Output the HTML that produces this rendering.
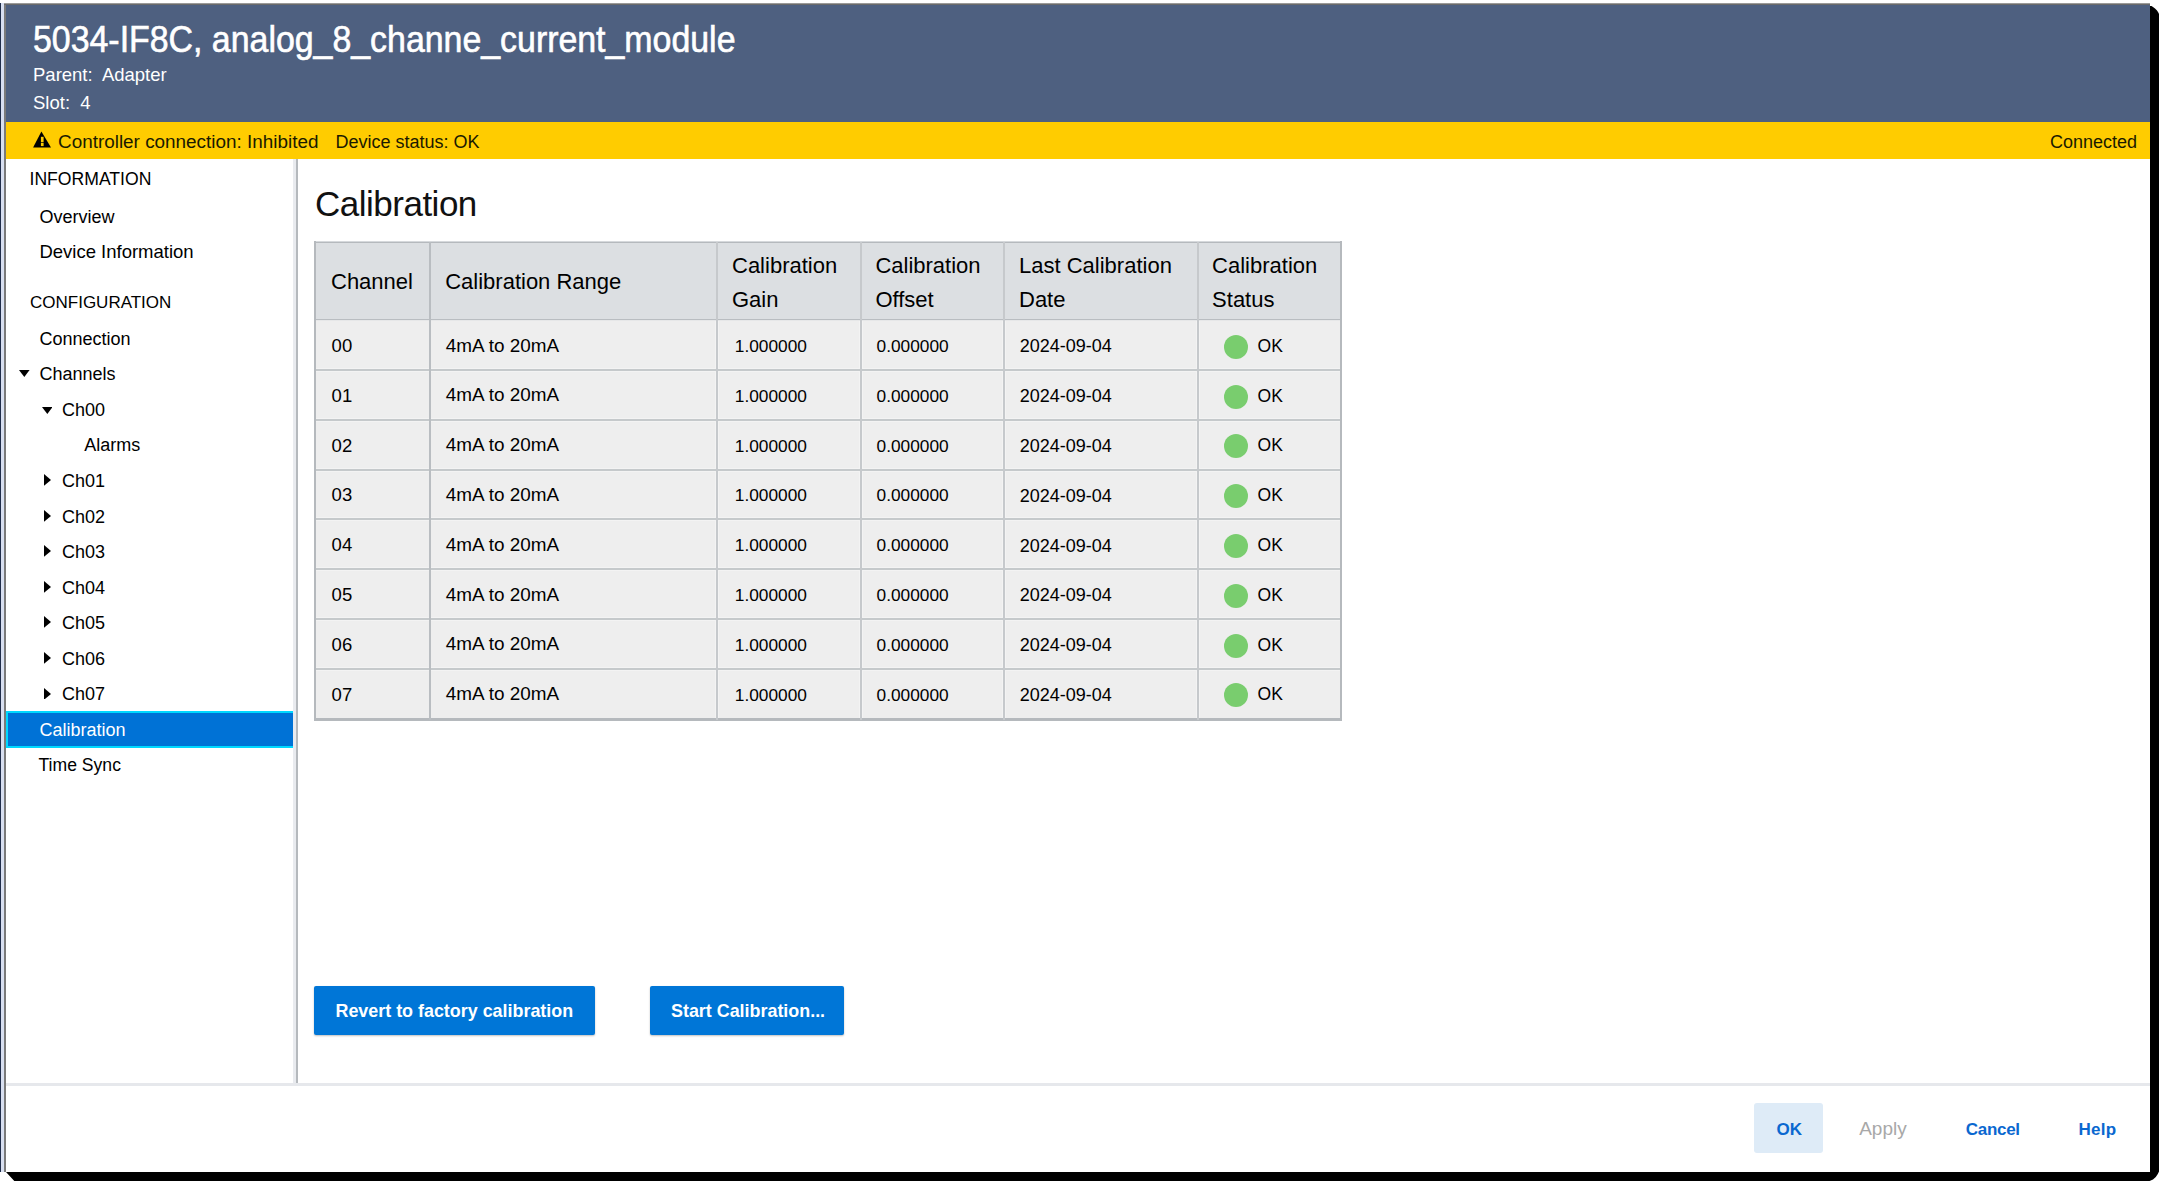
<!DOCTYPE html>
<html><head><meta charset="utf-8"><style>
html,body{margin:0;padding:0;width:2165px;height:1187px;overflow:hidden;background:#fff;}
body{position:relative;font-family:"Liberation Sans",sans-serif;}
.t{position:absolute;white-space:nowrap;line-height:1;}
.r{position:absolute;display:block;}
</style></head><body>
<div class="r" style="left:0px;top:3px;width:1px;height:1169px;background:#1f2d4a;"></div>
<div class="r" style="left:1px;top:3px;width:3px;height:1169px;background:#d8dff0;"></div>
<div class="r" style="left:4px;top:3px;width:2px;height:1169px;background:#7a7a7a;"></div>
<div class="r" style="left:4px;top:3px;width:2146px;height:1px;background:#9a9a9a;"></div>
<div class="r" style="left:4px;top:4px;width:2146px;height:1px;background:#6a6a6a;"></div>
<div class="r" style="left:6px;top:5px;width:2144px;height:117px;background:#4e6080;"></div>
<div class="r" style="left:6px;top:122px;width:2144px;height:37px;background:#ffcc00;"></div>
<svg class="r" style="left:0;top:0" width="2165" height="1187"><polygon points="6,1172 2150,1172 2150,6 2151.5,6 2153,7 2155,8.5 2157,10.5 2158.3,12.5 2159,14 2159,1171.5 2157.8,1174 2155.8,1177 2153,1179.6 2149.6,1181 14.3,1181" fill="#000"/></svg>
<div class="t" style="left:32.5px;top:21.92px;font-size:36px;color:#fff;transform:scaleX(0.941);transform-origin:0 0;-webkit-text-stroke:0.6px #fff;">5034-IF8C, analog_8_channe_current_module</div>
<div class="t" style="left:33px;top:65.64px;font-size:18.5px;color:#fff;">Parent:&nbsp; Adapter</div>
<div class="t" style="left:33px;top:94.34px;font-size:18.5px;color:#fff;">Slot:&nbsp; 4</div>
<svg class="r" style="left:32px;top:130px" width="21" height="19" viewBox="0 0 21 19"><polygon points="9.4,1.4 19,17.5 1.1,17.5" fill="#000"/><rect x="8.9" y="6.8" width="2.7" height="5.2" fill="#ffcc00"/><rect x="8.9" y="12.7" width="2.7" height="3.4" fill="#ffcc00"/></svg>
<div class="t" style="left:58px;top:132.50px;font-size:18.9px;color:#1a1a00;">Controller connection: Inhibited</div>
<div class="t" style="left:335.5px;top:132.56px;font-size:18px;color:#1a1a00;">Device status: OK</div>
<div class="t" style="left:2050px;top:133.46px;font-size:18px;color:#1a1a00;">Connected</div>
<div class="r" style="left:293px;top:159px;width:3px;height:924px;background:#e9ebef;"></div>
<div class="r" style="left:296px;top:159px;width:2px;height:924px;background:#b5b9bd;"></div>
<div class="r" style="left:6px;top:1083px;width:2144px;height:3px;background:#e6e8ec;"></div>
<div class="t" style="left:29.5px;top:170.90px;font-size:17.6px;color:#000;">INFORMATION</div>
<div class="t" style="left:39.4px;top:208.06px;font-size:18px;color:#000;">Overview</div>
<div class="t" style="left:39.4px;top:243.34px;font-size:18.5px;color:#000;">Device Information</div>
<div class="t" style="left:30px;top:293.81px;font-size:17px;color:#000;">CONFIGURATION</div>
<div class="t" style="left:39.4px;top:329.76px;font-size:18px;color:#000;">Connection</div>
<div class="t" style="left:39.5px;top:365.36px;font-size:18px;color:#000;">Channels</div>
<div class="t" style="left:62px;top:400.91px;font-size:18px;color:#000;">Ch00</div>
<div class="t" style="left:84.3px;top:436.46px;font-size:18px;color:#000;">Alarms</div>
<div class="t" style="left:62px;top:472.01px;font-size:18px;color:#000;">Ch01</div>
<div class="t" style="left:62px;top:507.56px;font-size:18px;color:#000;">Ch02</div>
<div class="t" style="left:62px;top:543.11px;font-size:18px;color:#000;">Ch03</div>
<div class="t" style="left:62px;top:578.66px;font-size:18px;color:#000;">Ch04</div>
<div class="t" style="left:62px;top:614.21px;font-size:18px;color:#000;">Ch05</div>
<div class="t" style="left:62px;top:649.76px;font-size:18px;color:#000;">Ch06</div>
<div class="t" style="left:62px;top:685.31px;font-size:18px;color:#000;">Ch07</div>
<svg class="r" style="left:19.4px;top:369.8px" width="10.6" height="7"><polygon points="0,0 10.6,0 5.3,7" fill="#000"/></svg>
<svg class="r" style="left:41.8px;top:407.2px" width="10.6" height="7"><polygon points="0,0 10.6,0 5.3,7" fill="#000"/></svg>
<svg class="r" style="left:44.2px;top:474.25px" width="7" height="11.8"><polygon points="0,0 7,5.9 0,11.8" fill="#000"/></svg>
<svg class="r" style="left:44.2px;top:509.79999999999995px" width="7" height="11.8"><polygon points="0,0 7,5.9 0,11.8" fill="#000"/></svg>
<svg class="r" style="left:44.2px;top:545.35px" width="7" height="11.8"><polygon points="0,0 7,5.9 0,11.8" fill="#000"/></svg>
<svg class="r" style="left:44.2px;top:580.9px" width="7" height="11.8"><polygon points="0,0 7,5.9 0,11.8" fill="#000"/></svg>
<svg class="r" style="left:44.2px;top:616.45px" width="7" height="11.8"><polygon points="0,0 7,5.9 0,11.8" fill="#000"/></svg>
<svg class="r" style="left:44.2px;top:652.0px" width="7" height="11.8"><polygon points="0,0 7,5.9 0,11.8" fill="#000"/></svg>
<svg class="r" style="left:44.2px;top:687.55px" width="7" height="11.8"><polygon points="0,0 7,5.9 0,11.8" fill="#000"/></svg>
<div class="r" style="left:6px;top:711px;width:287px;height:37px;background:#00d8ff;"></div>
<div class="r" style="left:8px;top:713px;width:285px;height:33px;background:#0072d6;"></div>
<div class="t" style="left:39.5px;top:721.46px;font-size:18px;color:#fff;">Calibration</div>
<div class="t" style="left:38.5px;top:756.80px;font-size:17.6px;color:#000;">Time Sync</div>
<div class="t" style="left:315px;top:185.67px;font-size:35px;color:#111;letter-spacing:-0.5px;">Calibration</div>
<div class="r" style="left:315px;top:242px;width:1026.5px;height:77.5px;background:#dcdfe2;"></div>
<div class="r" style="left:315px;top:319.5px;width:1026.5px;height:398.4px;background:#eeeeee;"></div>
<div class="r" style="left:715px;top:321px;width:1px;height:397px;background:#f3f3f3;"></div>
<div class="r" style="left:718px;top:321px;width:1px;height:397px;background:#f3f3f3;"></div>
<div class="r" style="left:859px;top:321px;width:1px;height:397px;background:#f3f3f3;"></div>
<div class="r" style="left:862px;top:321px;width:1px;height:397px;background:#f3f3f3;"></div>
<div class="r" style="left:1002px;top:321px;width:1px;height:397px;background:#f3f3f3;"></div>
<div class="r" style="left:1005px;top:321px;width:1px;height:397px;background:#f3f3f3;"></div>
<div class="r" style="left:1196px;top:321px;width:1px;height:397px;background:#f3f3f3;"></div>
<div class="r" style="left:1199px;top:321px;width:1px;height:397px;background:#f3f3f3;"></div>
<div class="r" style="left:314px;top:241px;width:1028px;height:1px;background:#d6d9dc;"></div>
<div class="r" style="left:314px;top:242px;width:1028px;height:1px;background:#b5b9bd;"></div>
<div class="r" style="left:314px;top:319px;width:1028px;height:1px;background:#b9bdc1;"></div>
<div class="r" style="left:314px;top:320px;width:1028px;height:1px;background:#e6e7e8;"></div>
<div class="r" style="left:314px;top:368px;width:1028px;height:1px;background:#f3f3f3;"></div>
<div class="r" style="left:314px;top:369px;width:1028px;height:2px;background:#c5c9cb;"></div>
<div class="r" style="left:314px;top:371px;width:1028px;height:1px;background:#f3f3f3;"></div>
<div class="r" style="left:314px;top:418px;width:1028px;height:1px;background:#f3f3f3;"></div>
<div class="r" style="left:314px;top:419px;width:1028px;height:2px;background:#c5c9cb;"></div>
<div class="r" style="left:314px;top:421px;width:1028px;height:1px;background:#f3f3f3;"></div>
<div class="r" style="left:314px;top:468px;width:1028px;height:1px;background:#f3f3f3;"></div>
<div class="r" style="left:314px;top:469px;width:1028px;height:2px;background:#c5c9cb;"></div>
<div class="r" style="left:314px;top:471px;width:1028px;height:1px;background:#f3f3f3;"></div>
<div class="r" style="left:314px;top:517px;width:1028px;height:1px;background:#f3f3f3;"></div>
<div class="r" style="left:314px;top:518px;width:1028px;height:2px;background:#c5c9cb;"></div>
<div class="r" style="left:314px;top:520px;width:1028px;height:1px;background:#f3f3f3;"></div>
<div class="r" style="left:314px;top:567px;width:1028px;height:1px;background:#f3f3f3;"></div>
<div class="r" style="left:314px;top:568px;width:1028px;height:2px;background:#c5c9cb;"></div>
<div class="r" style="left:314px;top:570px;width:1028px;height:1px;background:#f3f3f3;"></div>
<div class="r" style="left:314px;top:617px;width:1028px;height:1px;background:#f3f3f3;"></div>
<div class="r" style="left:314px;top:618px;width:1028px;height:2px;background:#c5c9cb;"></div>
<div class="r" style="left:314px;top:620px;width:1028px;height:1px;background:#f3f3f3;"></div>
<div class="r" style="left:314px;top:667px;width:1028px;height:1px;background:#f3f3f3;"></div>
<div class="r" style="left:314px;top:668px;width:1028px;height:2px;background:#c5c9cb;"></div>
<div class="r" style="left:314px;top:670px;width:1028px;height:1px;background:#f3f3f3;"></div>
<div class="r" style="left:314px;top:718px;width:1028px;height:3px;background:#b5b9bd;"></div>
<div class="r" style="left:314px;top:241px;width:2px;height:480px;background:#b5b9bd;"></div>
<div class="r" style="left:1340px;top:241px;width:2px;height:480px;background:#b5b9bd;"></div>
<div class="r" style="left:429px;top:242px;width:2px;height:478px;background:#b9bdc1;"></div>
<div class="r" style="left:716px;top:242px;width:2px;height:478px;background:#c6c9cc;"></div>
<div class="r" style="left:860px;top:242px;width:2px;height:478px;background:#c6c9cc;"></div>
<div class="r" style="left:1003px;top:242px;width:2px;height:478px;background:#c6c9cc;"></div>
<div class="r" style="left:1197px;top:242px;width:2px;height:478px;background:#c6c9cc;"></div>
<div class="t" style="left:331px;top:271.07px;font-size:22px;color:#000;">Channel</div>
<div class="t" style="left:445.2px;top:271.07px;font-size:22px;color:#000;">Calibration Range</div>
<div class="t" style="left:732px;top:255.27px;font-size:22px;color:#000;">Calibration</div>
<div class="t" style="left:732px;top:288.77px;font-size:22px;color:#000;">Gain</div>
<div class="t" style="left:875.4px;top:255.27px;font-size:22px;color:#000;">Calibration</div>
<div class="t" style="left:875.4px;top:288.77px;font-size:22px;color:#000;">Offset</div>
<div class="t" style="left:1019px;top:255.27px;font-size:22px;color:#000;">Last Calibration</div>
<div class="t" style="left:1019px;top:288.77px;font-size:22px;color:#000;">Date</div>
<div class="t" style="left:1212.1px;top:255.27px;font-size:22px;color:#000;">Calibration</div>
<div class="t" style="left:1212.1px;top:288.77px;font-size:22px;color:#000;">Status</div>
<div class="t" style="left:331.6px;top:336.94px;font-size:18.5px;color:#000;">00</div>
<div class="t" style="left:445.8px;top:336.60px;font-size:18.9px;color:#000;">4mA to 20mA</div>
<div class="t" style="left:734.8px;top:337.95px;font-size:17.3px;color:#000;">1.000000</div>
<div class="t" style="left:876.6px;top:337.95px;font-size:17.3px;color:#000;">0.000000</div>
<div class="t" style="left:1019.8px;top:337.36px;font-size:18px;color:#000;">2024-09-04</div>
<div class="r" style="left:1223.5px;top:334.8px;width:24px;height:24px;background:#79cd6e;border-radius:50%;"></div>
<div class="t" style="left:1257.6px;top:337.78px;font-size:17.5px;color:#000;">OK</div>
<div class="t" style="left:331.6px;top:386.74px;font-size:18.5px;color:#000;">01</div>
<div class="t" style="left:445.8px;top:386.40px;font-size:18.9px;color:#000;">4mA to 20mA</div>
<div class="t" style="left:734.8px;top:387.75px;font-size:17.3px;color:#000;">1.000000</div>
<div class="t" style="left:876.6px;top:387.75px;font-size:17.3px;color:#000;">0.000000</div>
<div class="t" style="left:1019.8px;top:387.16px;font-size:18px;color:#000;">2024-09-04</div>
<div class="r" style="left:1223.5px;top:384.6px;width:24px;height:24px;background:#79cd6e;border-radius:50%;"></div>
<div class="t" style="left:1257.6px;top:387.58px;font-size:17.5px;color:#000;">OK</div>
<div class="t" style="left:331.6px;top:436.54px;font-size:18.5px;color:#000;">02</div>
<div class="t" style="left:445.8px;top:436.20px;font-size:18.9px;color:#000;">4mA to 20mA</div>
<div class="t" style="left:734.8px;top:437.55px;font-size:17.3px;color:#000;">1.000000</div>
<div class="t" style="left:876.6px;top:437.55px;font-size:17.3px;color:#000;">0.000000</div>
<div class="t" style="left:1019.8px;top:436.96px;font-size:18px;color:#000;">2024-09-04</div>
<div class="r" style="left:1223.5px;top:434.4px;width:24px;height:24px;background:#79cd6e;border-radius:50%;"></div>
<div class="t" style="left:1257.6px;top:437.38px;font-size:17.5px;color:#000;">OK</div>
<div class="t" style="left:331.6px;top:486.34px;font-size:18.5px;color:#000;">03</div>
<div class="t" style="left:445.8px;top:486.00px;font-size:18.9px;color:#000;">4mA to 20mA</div>
<div class="t" style="left:734.8px;top:487.35px;font-size:17.3px;color:#000;">1.000000</div>
<div class="t" style="left:876.6px;top:487.35px;font-size:17.3px;color:#000;">0.000000</div>
<div class="t" style="left:1019.8px;top:486.76px;font-size:18px;color:#000;">2024-09-04</div>
<div class="r" style="left:1223.5px;top:484.2px;width:24px;height:24px;background:#79cd6e;border-radius:50%;"></div>
<div class="t" style="left:1257.6px;top:487.18px;font-size:17.5px;color:#000;">OK</div>
<div class="t" style="left:331.6px;top:536.14px;font-size:18.5px;color:#000;">04</div>
<div class="t" style="left:445.8px;top:535.80px;font-size:18.9px;color:#000;">4mA to 20mA</div>
<div class="t" style="left:734.8px;top:537.15px;font-size:17.3px;color:#000;">1.000000</div>
<div class="t" style="left:876.6px;top:537.15px;font-size:17.3px;color:#000;">0.000000</div>
<div class="t" style="left:1019.8px;top:536.56px;font-size:18px;color:#000;">2024-09-04</div>
<div class="r" style="left:1223.5px;top:534.0px;width:24px;height:24px;background:#79cd6e;border-radius:50%;"></div>
<div class="t" style="left:1257.6px;top:536.98px;font-size:17.5px;color:#000;">OK</div>
<div class="t" style="left:331.6px;top:585.94px;font-size:18.5px;color:#000;">05</div>
<div class="t" style="left:445.8px;top:585.60px;font-size:18.9px;color:#000;">4mA to 20mA</div>
<div class="t" style="left:734.8px;top:586.95px;font-size:17.3px;color:#000;">1.000000</div>
<div class="t" style="left:876.6px;top:586.95px;font-size:17.3px;color:#000;">0.000000</div>
<div class="t" style="left:1019.8px;top:586.36px;font-size:18px;color:#000;">2024-09-04</div>
<div class="r" style="left:1223.5px;top:583.8px;width:24px;height:24px;background:#79cd6e;border-radius:50%;"></div>
<div class="t" style="left:1257.6px;top:586.78px;font-size:17.5px;color:#000;">OK</div>
<div class="t" style="left:331.6px;top:635.74px;font-size:18.5px;color:#000;">06</div>
<div class="t" style="left:445.8px;top:635.40px;font-size:18.9px;color:#000;">4mA to 20mA</div>
<div class="t" style="left:734.8px;top:636.75px;font-size:17.3px;color:#000;">1.000000</div>
<div class="t" style="left:876.6px;top:636.75px;font-size:17.3px;color:#000;">0.000000</div>
<div class="t" style="left:1019.8px;top:636.16px;font-size:18px;color:#000;">2024-09-04</div>
<div class="r" style="left:1223.5px;top:633.5999999999999px;width:24px;height:24px;background:#79cd6e;border-radius:50%;"></div>
<div class="t" style="left:1257.6px;top:636.58px;font-size:17.5px;color:#000;">OK</div>
<div class="t" style="left:331.6px;top:685.54px;font-size:18.5px;color:#000;">07</div>
<div class="t" style="left:445.8px;top:685.20px;font-size:18.9px;color:#000;">4mA to 20mA</div>
<div class="t" style="left:734.8px;top:686.55px;font-size:17.3px;color:#000;">1.000000</div>
<div class="t" style="left:876.6px;top:686.55px;font-size:17.3px;color:#000;">0.000000</div>
<div class="t" style="left:1019.8px;top:685.96px;font-size:18px;color:#000;">2024-09-04</div>
<div class="r" style="left:1223.5px;top:683.4px;width:24px;height:24px;background:#79cd6e;border-radius:50%;"></div>
<div class="t" style="left:1257.6px;top:686.38px;font-size:17.5px;color:#000;">OK</div>
<div class="r" style="left:314px;top:986px;width:281px;height:49px;background:#0076d7;border-radius:2px;box-shadow:0 1px 2px rgba(0,0,0,.25);"></div>
<div class="t" style="left:335.5px;top:1003.24px;font-size:17.9px;color:#fff;font-weight:700;">Revert to factory calibration</div>
<div class="r" style="left:650px;top:986px;width:194px;height:49px;background:#0076d7;border-radius:2px;box-shadow:0 1px 2px rgba(0,0,0,.25);"></div>
<div class="t" style="left:671px;top:1003.24px;font-size:17.9px;color:#fff;font-weight:700;">Start Calibration...</div>
<div class="r" style="left:1754px;top:1103px;width:69px;height:50px;background:#deebf7;border-radius:3px;"></div>
<div class="t" style="left:1776.6px;top:1120.91px;font-size:17px;color:#0a68d0;font-weight:700;">OK</div>
<div class="t" style="left:1859.2px;top:1119.21px;font-size:19px;color:#a8a8a8;">Apply</div>
<div class="t" style="left:1965.8px;top:1120.71px;font-size:17px;color:#0a68d0;font-weight:700;letter-spacing:-0.3px;">Cancel</div>
<div class="t" style="left:2078.5px;top:1120.71px;font-size:17px;color:#0a68d0;font-weight:700;letter-spacing:0.3px;">Help</div>
</body></html>
